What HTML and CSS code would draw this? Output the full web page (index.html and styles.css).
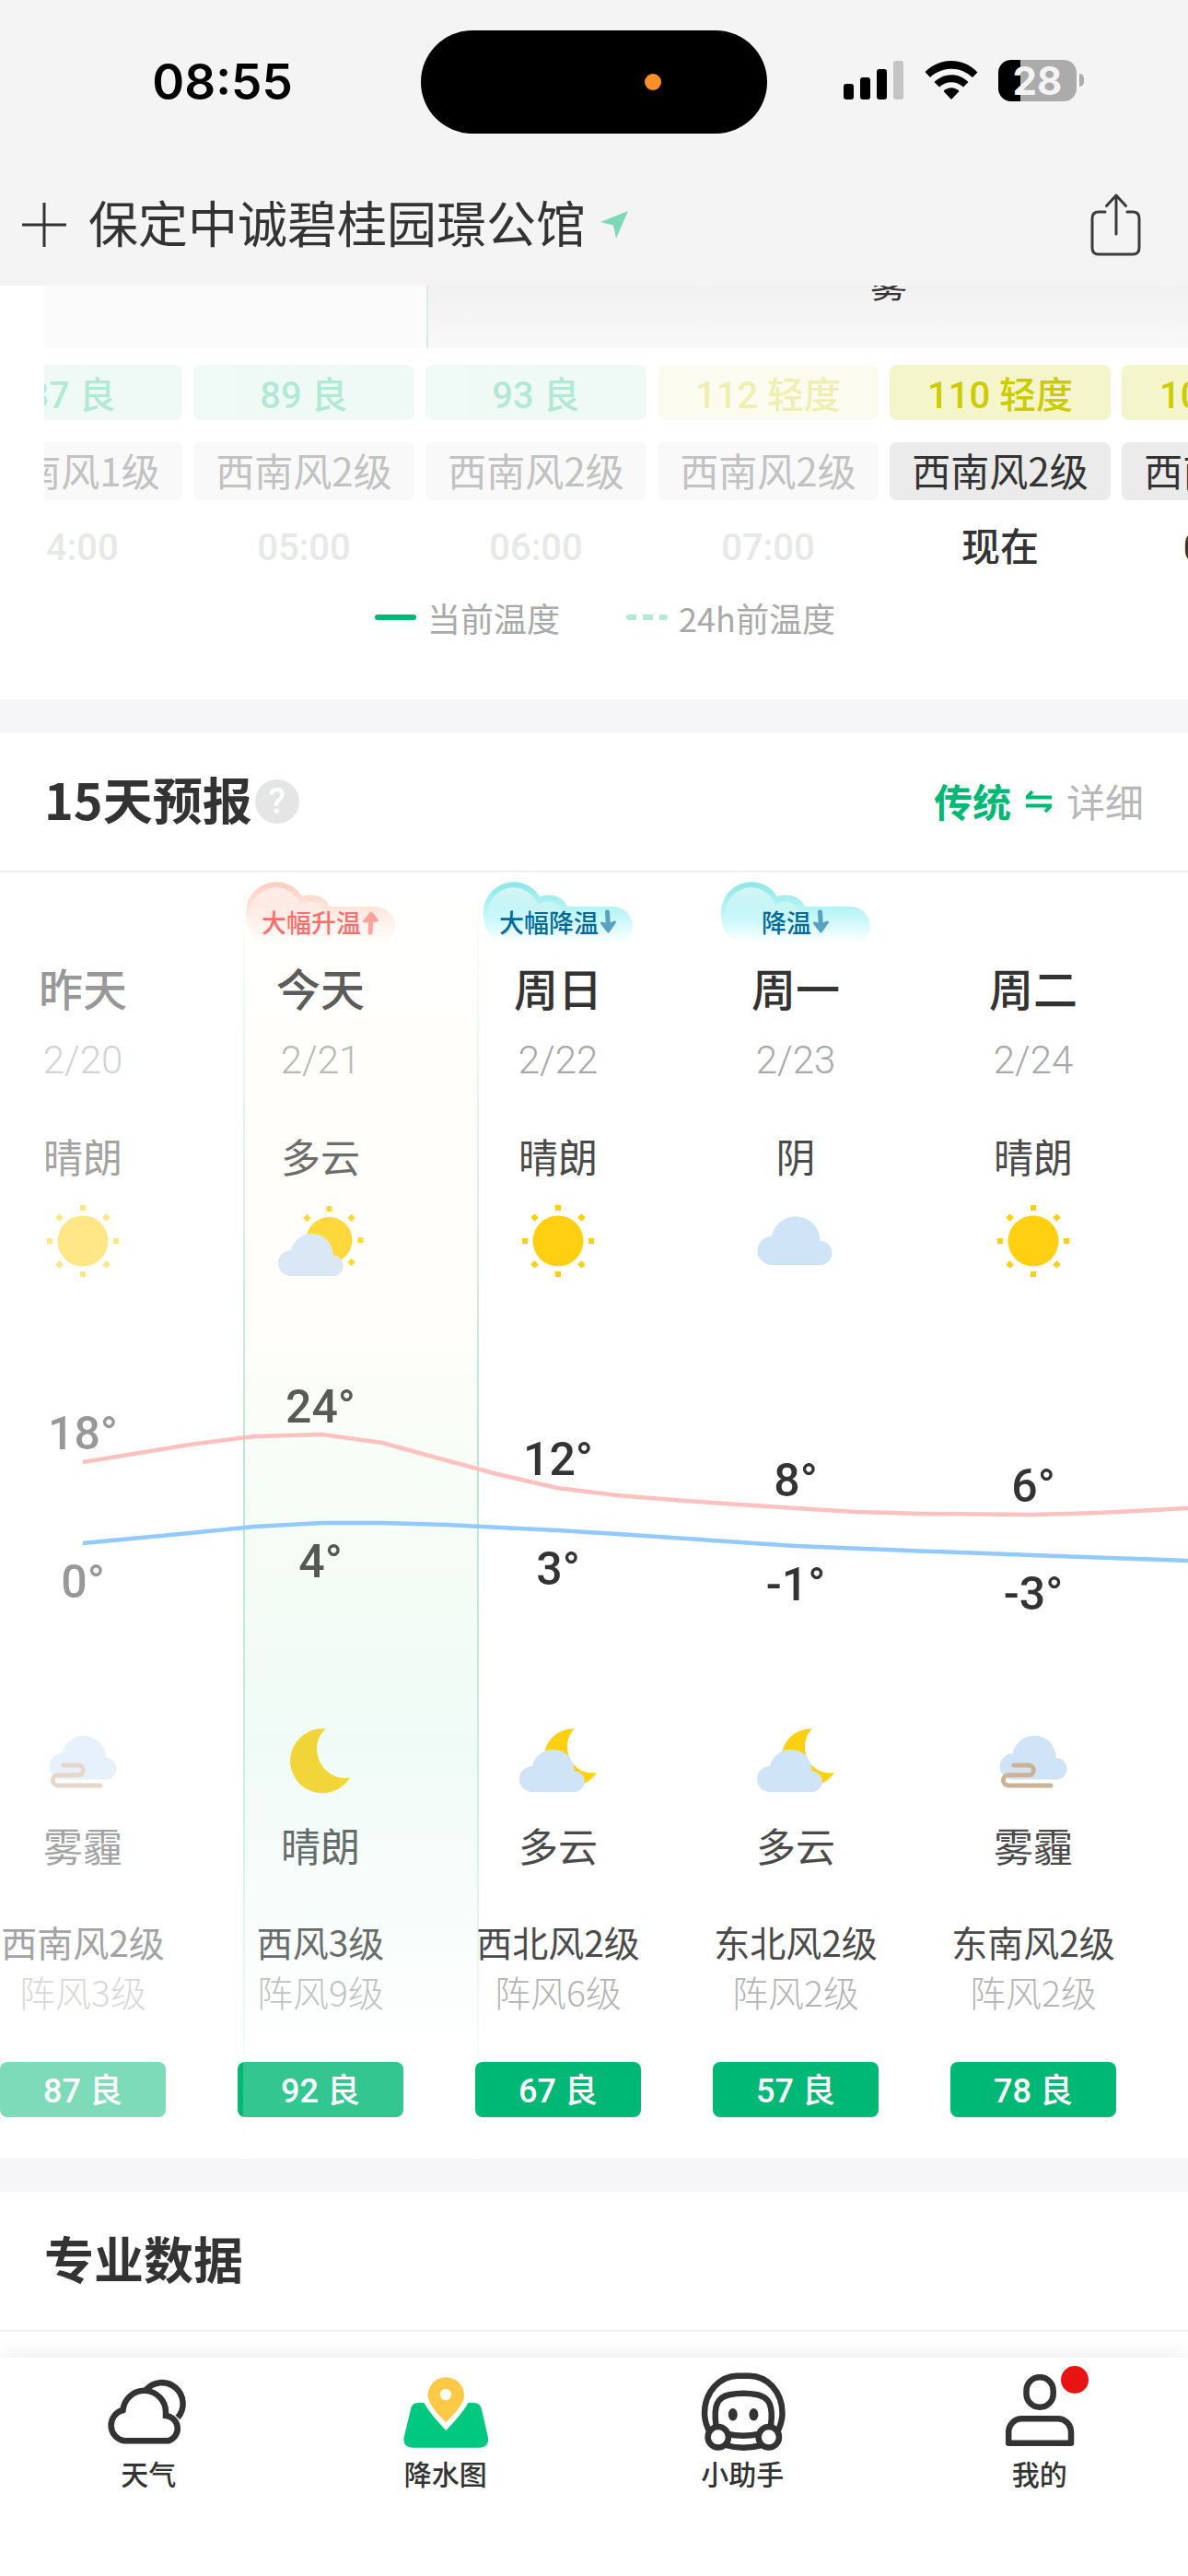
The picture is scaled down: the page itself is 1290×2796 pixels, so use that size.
FILE: index.html
```html
<!DOCTYPE html>
<html lang="zh-CN">
<head>
    <meta charset="UTF-8">
    <meta name="viewport" content="width=device-width, initial-scale=1.0">
    <title>15天预报</title>
    <link rel="stylesheet" href="styles.css">
</head>
<body>
    <header class="header">
        <div class="status">
            <span class="clock">08:55</span>
            <div class="island"><span class="mic-dot"></span></div>
            <div class="status-icons">
                <svg width="66" height="42" viewBox="0 0 66 42">
                    <rect x="0" y="25" width="11" height="17" rx="3"/>
                    <rect x="18" y="18" width="11" height="24" rx="3"/>
                    <rect x="36" y="9" width="11" height="33" rx="3"/>
                    <rect x="54" y="0" width="11" height="42" rx="3" fill="#c4c4c4"/>
                </svg>
                <svg width="58" height="42" viewBox="0 0 58 42">
                    <path d="M0.5 12C16.500 -4 41.500 -4 57.500 12.500L52 18C39 5.500 19 5.500 6 18Z"/>
                    <path d="M10.500 23C21 12.500 37 12.500 47.500 23L42 28.500C34.500 21.500 23.500 21.500 16 28.500Z"/>
                    <path d="M20.500 33C25.500 28 32.500 28 37.500 33L29 42Z"/>
                </svg>
                <div class="battery"><span class="battery-level">28</span><span class="battery-tip"></span></div>
            </div>
        </div>
        <div class="titlebar">
            <button class="icon-btn" aria-label="添加城市">
                <svg width="48" height="48" viewBox="0 0 48 48"><path d="M24 0V48M0 24H48" stroke="#333" stroke-width="3"/></svg>
            </button>
            <h1 class="city">保定中诚碧桂园璟公馆</h1>
            <svg class="locate" width="30" height="30" viewBox="0 0 30 30"><path d="M30 0L17 30L14 15.500L0 12Z" fill="#7cd9b8"/></svg>
            <button class="icon-btn share" aria-label="分享">
                <svg width="56" height="70" viewBox="0 0 56 70" fill="none" stroke="#3c3c3c" stroke-width="3" stroke-linecap="round" stroke-linejoin="round">
                    <path d="M16 21H9Q2 21 2 28V60Q2 67 9 67H46Q53 67 53 60V28Q53 21 46 21H40M28 45V3M17.500 14.500L28 3L38.500 14.500"/>
                </svg>
            </button>
        </div>
    </header>

    <main class="main">
        <section class="hourly">
            <div class="hour-chart">
                <div class="chart-past"></div>
                <div class="chart-now"><span class="chart-label">雾</span></div>
            </div>
            <div class="hour-clip"><div class="hours" id="hours"></div></div>
            <div class="legend">
                <span class="legend-item"><i class="dash"></i>当前温度</span>
                <span class="legend-item"><i class="dash dotted"></i>24h前温度</span>
            </div>
        </section>

        <section class="card">
            <div class="card-head">
                <h2>15天预报</h2>
                <button class="help" aria-label="说明">?</button>
                <div class="switch">
                    <button class="switch-on">传统</button>
                    <svg width="28" height="24" viewBox="0 0 28 24" fill="none" stroke="#00b876" stroke-width="4"><path d="M0 7.500H28M1 7.500L7 1M28 16.500H0M27 16.500L21 23"/></svg>
                    <button class="switch-off">详细</button>
                </div>
            </div>
            <div class="forecast">
                <div class="days" id="days"></div>
                <div class="today-band"></div>
                <svg class="curves" viewBox="0 0 1290 464" preserveAspectRatio="none" fill="none" stroke-width="4.500">
                    <polyline stroke="#ffc0c0" points="90,190 206,171 276,162 350,160 415,169 477,186 540,203 605,218 670,226 744,232 864,240 930,244 1004,246 1121,247 1193,245 1290,240"/>
                    <polyline stroke="#92caff" points="90,278 206,267 276,260 350,256 415,256 485,258 605,264 670,268 864,281 987,286 1121,291 1234,295 1290,297"/>
                </svg>
            </div>
        </section>

        <section class="card">
            <div class="card-head">
                <h2>专业数据</h2>
            </div>
        </section>
    </main>

    <nav class="tabbar">
        <a class="tab" href="#weather">
            <svg width="100" height="90" viewBox="0 0 100 90" fill="none" stroke="#333" stroke-width="6.500">
                <path d="M47.500 24A22.800 22.800 0 1 1 82 54"/>
                <path d="M22.500 46A17 17 0 0 0 24 79.300H72A14 14 0 0 0 69 52V48A23.300 23.300 0 0 0 22.500 46Z"/>
            </svg>
            天气
        </a>
        <a class="tab" href="#rain">
            <svg width="100" height="90" viewBox="0 0 100 90">
                <path fill="#00c880" d="M26.300 38H20Q13 38 12 45L4.500 76Q3.500 86.700 14 86.700H86Q97 86.700 96 76L89 45Q87.500 38 80.500 38H74.500Q68 50 50.200 68Q33 50 26.300 38Z"/>
                <path fill="#fec944" fill-rule="evenodd" d="M50.200 59.300C42 51 30.600 39 30.600 30A19.700 19.700 0 0 1 70 30C70 39 58.500 51 50.200 59.300ZM50 22.800A6.200 6.200 0 1 0 50 35.200A6.200 6.200 0 1 0 50 22.800Z"/>
            </svg>
            降水图
        </a>
        <a class="tab" href="#helper">
            <svg width="100" height="90" viewBox="0 0 100 90" fill="none" stroke="#333" stroke-width="6.500">
                <path d="M13.500 68C10 60 9 55 9 49.500C9 26 26 8.700 45 8.700H57.500C77 8.700 93.500 26 93.500 49.500C93.500 55 92.500 60 89 68"/>
                <path d="M21.500 63C18.500 41 23 32 36 29.300Q51 26.200 66.500 29.300C79 32 84 41 81 63"/>
                <path d="M34 72Q51 75.500 68 72M32 84Q51 89.500 71 84"/>
                <circle cx="23.800" cy="75.300" r="11.200" fill="#fff"/>
                <circle cx="78.800" cy="75.300" r="11.200" fill="#fff"/>
                <g fill="#333" stroke="none"><ellipse cx="39.800" cy="50.700" rx="5" ry="6.800"/><ellipse cx="62.400" cy="50.700" rx="5" ry="6.800"/></g>
            </svg>
            小助手
        </a>
        <a class="tab" href="#me">
            <svg width="100" height="90" viewBox="0 0 100 90" fill="none" stroke="#333" stroke-width="6.500" stroke-linejoin="round">
                <rect x="35.500" y="10.300" width="29.200" height="32.400" rx="14.500"/>
                <path d="M16.200 81.700V70C16.200 62 22 55.300 31 55.300H69C78 55.300 84 62 84 70V81.700Z"/>
                <circle cx="88" cy="13" r="15" fill="#e71413" stroke="none"/>
            </svg>
            我的
        </a>
    </nav>

    <script>
        const hours = [
            { aqi: "87 良", level: "good", wind: "西南风1级", time: "04:00", past: true },
            { aqi: "89 良", level: "good", wind: "西南风2级", time: "05:00", past: true },
            { aqi: "93 良", level: "good", wind: "西南风2级", time: "06:00", past: true },
            { aqi: "112 轻度", level: "light", wind: "西南风2级", time: "07:00", past: true },
            { aqi: "110 轻度", level: "light", wind: "西南风2级", time: "现在" },
            { aqi: "108 轻度", level: "light", wind: "西南风2级", time: "09:00" }
        ];

        // highTop / lowTop: label position inside the curve area
        const days = [
            { name: "昨天", date: "2/20", day: "晴朗", dayIcon: "sun", high: 18, highTop: 129, low: 0, lowTop: 290, nightIcon: "haze", night: "雾霾", wind: "西南风2级", gust: "阵风3级", aqi: "87 良", cls: "past" },
            { name: "今天", date: "2/21", day: "多云", dayIcon: "sunCloud", high: 24, highTop: 100, low: 4, lowTop: 268, nightIcon: "moon", night: "晴朗", wind: "西风3级", gust: "阵风9级", aqi: "92 良", tip: "大幅升温", tipType: "up" },
            { name: "周日", date: "2/22", day: "晴朗", dayIcon: "sun", high: 12, highTop: 157, low: 3, lowTop: 276, nightIcon: "moonCloud", night: "多云", wind: "西北风2级", gust: "阵风6级", aqi: "67 良", tip: "大幅降温", tipType: "down" },
            { name: "周一", date: "2/23", day: "阴", dayIcon: "cloud", high: 8, highTop: 180, low: -1, lowTop: 293, nightIcon: "moonCloud", night: "多云", wind: "东北风2级", gust: "阵风2级", aqi: "57 良", tip: "降温", tipType: "down" },
            { name: "周二", date: "2/24", day: "晴朗", dayIcon: "sun", high: 6, highTop: 186, low: -3, lowTop: 303, nightIcon: "haze", night: "雾霾", wind: "东南风2级", gust: "阵风2级", aqi: "78 良" }
        ];

        const ray = (angle, r) => `<rect x="-3" y="${-r - 3}" width="6" height="6" transform="rotate(${angle})"/>`;
        const smallCloud = `<path fill="#d0e4f8" d="M18 60A23 23 0 0 1 63.500 65A11.700 11.700 0 0 1 66 88H18A14 14 0 0 1 18 60Z"/>`;
        const bigCloud = `<path fill="#d0e4f8" d="M24 44.700A26.500 26.500 0 0 1 76.500 49.700A13.300 13.300 0 0 1 79 76H22.500A15.700 15.700 0 0 1 24 44.700Z"/>`;

        const icons = {
            sun: `<g fill="#ffd012" transform="translate(50 50)"><circle r="27.500"/>${[0, 45, 90, 135, 180, 225, 270, 315].map(a => ray(a, 36)).join("")}</g>`,
            sunCloud: `<g fill="#ffd012" transform="translate(59.500 49)"><circle r="25"/>${[-45, 0, 45, 90, 135].map(a => ray(a, 34)).join("")}</g>${smallCloud}`,
            cloud: bigCloud,
            moon: `<path fill="#ffd012" d="M56 15.500A35 35 0 1 0 82 68.500C62 72 46 55 46 37C46 28 50 20 56 15.500Z"/>`,
            moonCloud: `<path fill="#ffd012" d="M68 15.500A31 31 0 1 0 92 63C74 66 60 52 60 35C60 27 63 20 68 15.500Z"/><g transform="translate(4 -4)">${smallCloud}</g>`,
            haze: `<g transform="translate(6 2) scale(.9)">${bigCloud}</g><path fill="none" stroke="#cdb297" stroke-width="5" stroke-linecap="round" d="M29 55H45A5.300 5.300 0 0 1 45 65.700H23A5.600 5.600 0 0 0 23 77H69"/>`
        };

        const icon = (name) => `<svg class="w-icon" width="100" height="100" viewBox="0 0 100 100">${icons[name]}</svg>`;

        const tip = (el) => {
            if (!el.tip) return `<div class="tip"></div>`;
            const arrow = el.tipType === "up"
                ? `<path d="M9 24L10 6" stroke="#ff8c87"/><path d="M2.500 12L10 3L16.500 11Z" fill="#ff8c87" stroke="#ff8c87" stroke-width="3"/>`
                : `<path d="M8.500 2L9.500 19" stroke="#58a3c2"/><path d="M2.500 14L9.500 23L16.500 13L9.500 16Z" fill="#58a3c2" stroke="#58a3c2" stroke-width="3"/>`;
            return `
                <div class="tip tip-${el.tipType}">
                    <svg class="tip-bg" width="162" height="64" viewBox="0 0 162 64">
                        <defs>
                            <linearGradient id="tip-${el.date}" x1="0" y1="0" x2="0" y2="1">
                                <stop offset="0" class="tip-c1"/><stop offset=".55" class="tip-c2"/><stop offset="1" class="tip-c3"/>
                            </linearGradient>
                            <linearGradient id="tip-in-${el.date}" x1="0" y1="0" x2="0" y2="1">
                                <stop offset="0" stop-color="#fff" stop-opacity=".6"/><stop offset="1" stop-color="#fff" stop-opacity="0"/>
                            </linearGradient>
                        </defs>
                        <path fill="url(#tip-${el.date})" d="M20 64C6 60 0 46 0 33A33 33 0 0 1 61 13C73 9 87 13 91 24H139C153 24 162 34 162 46C162 54 158 60 150 64Z"/>
                        <path fill="url(#tip-in-${el.date})" d="M5 36A28 28 0 0 1 59 22C70 15 80 19 85 28V40H5Z"/>
                    </svg>
                    <span>${el.tip}</span>
                    <svg width="19" height="26" viewBox="0 0 19 26" fill="none" stroke-width="5" stroke-linecap="round" stroke-linejoin="round">${arrow}</svg>
                </div>`;
        };

        document.getElementById("hours").innerHTML = hours.map((el) => `
            <div class="hour ${el.past ? "past" : ""}">
                <div class="hour-aqi ${el.level}">${el.aqi}</div>
                <div class="hour-wind">${el.wind}</div>
                <div class="hour-time">${el.time}</div>
            </div>
        `).join("");

        document.getElementById("days").innerHTML = days.map((el) => `
            <div class="day ${el.cls || ""}">
                ${tip(el)}
                <div class="day-name">${el.name}</div>
                <div class="day-date">${el.date}</div>
                <div class="day-text">${el.day}</div>
                ${icon(el.dayIcon)}
                <div class="temps">
                    <span class="temp" style="top: ${el.highTop}px">${el.high}°</span>
                    <span class="temp" style="top: ${el.lowTop}px">${el.low}°</span>
                </div>
                ${icon(el.nightIcon)}
                <div class="day-text night">${el.night}</div>
                <div class="day-wind">${el.wind}</div>
                <div class="day-gust">${el.gust}</div>
                <div class="day-aqi">${el.aqi}</div>
            </div>
        `).join("");
    </script>
</body>
</html>
```
FILE: styles.css
```css
* {
    box-sizing: border-box;
}

body {
    margin: 0;
    min-height: 100vh;
    display: flex;
    flex-direction: column;
    background: #fff;
    color: #333;
    font-family: "Noto Sans CJK SC", sans-serif;
    white-space: nowrap;
    overflow-x: hidden;
}

h1, h2 {
    margin: 0;
}

button {
    padding: 0;
    border: 0;
    background: none;
    font: inherit;
    color: inherit;
}

svg {
    display: block;
    flex: none;
    overflow: visible;
}

/* header */
.header {
    background: #f4f4f4;
}

.status {
    display: grid;
    grid-template-columns: 1fr 376px 1fr;
    align-items: center;
    padding-top: 33px;
}

.clock {
    padding-left: 26px;
    text-align: center;
    color: #000;
    font: 600 53px/60px Inter, sans-serif;
}

.island {
    display: flex;
    align-items: center;
    justify-content: flex-end;
    height: 112px;
    padding-right: 115px;
    border-radius: 56px;
    background: #000;
}

.mic-dot {
    width: 18px;
    height: 18px;
    border-radius: 50%;
    background: #ff8f28;
}

.status-icons {
    display: flex;
    align-items: center;
    justify-content: center;
    gap: 22px;
    padding: 0 30px 4px 0;
}

.battery {
    display: flex;
    align-items: center;
    gap: 3px;
}

.battery-level {
    width: 85px;
    border-radius: 14px;
    background: linear-gradient(90deg, #000 28%, #ababab 28%);
    color: #f4f4f4;
    text-align: center;
    font: 700 42px/45px Inter, sans-serif;
}

.battery-tip {
    width: 5px;
    height: 14px;
    border-radius: 0 7px 7px 0;
    background: #ababab;
}

.titlebar {
    display: flex;
    align-items: center;
    height: 165px;
    padding: 33px 50px 0 24px;
}

.city {
    margin: 0 16px 6px 24px;
    font-size: 54px;
    font-weight: 400;
    line-height: 72px;
}

.share {
    margin-left: auto;
}

.main {
    flex: 1;
}

/* hourly */
.hourly {
    padding-bottom: 64px;
}

.hour-chart {
    display: flex;
    height: 68px;
    padding-left: 48px;
    overflow: hidden;
}

.chart-past {
    width: 415px;
    background: #fbfbfb;
}

.chart-now {
    position: relative;
    flex: 1;
    border-left: 2px solid #d5f1e7;
    background: linear-gradient(#f1f1f1, #f9f9f9);
}

.chart-label {
    position: absolute;
    top: -29px;
    left: 480px;
    font-size: 40px;
    line-height: 50px;
}

.hour-clip {
    margin-left: 48px;
    padding-top: 18px;
    overflow: hidden;
}

.hours {
    display: flex;
    gap: 12px;
    margin-left: -90px;
}

.hour {
    flex: none;
    width: 240px;
    font-size: 42px;
    text-align: center;
}

.hour-aqi {
    height: 60px;
    padding-top: 4px;
    border-radius: 8px;
    line-height: 60px;
    font-size: 40px;
    font-weight: 500;
    font-family: Roboto, "Noto Sans CJK SC", sans-serif;
}

.hour-aqi.light {
    background: #f5f5cc;
    color: #cccc00;
}

.hour-aqi.good {
    background: #ccf1e4;
    color: #00b876;
}

.past .hour-aqi {
    opacity: .3;
}

.hour-wind {
    height: 63px;
    margin-top: 24px;
    border-radius: 8px;
    background: #ebebeb;
    line-height: 60px;
}

.past .hour-wind {
    background: #f9f9f9;
    color: #c2c2c2;
}

.hour-time {
    margin-top: 22px;
    line-height: 60px;
    font-weight: 500;
    font-family: Roboto, "Noto Sans CJK SC", sans-serif;
}

.past .hour-time {
    color: #e8e8e8;
    font-size: 40px;
}

.legend {
    display: flex;
    justify-content: center;
    gap: 72px;
    margin-top: 20px;
    padding-left: 24px;
    color: #a9a9a9;
    font-size: 36px;
    line-height: 50px;
}

.legend-item {
    display: flex;
    align-items: center;
    gap: 12px;
}

.dash {
    width: 45px;
    height: 6px;
    border-radius: 3px;
    background: #00b876;
}

.dash.dotted {
    background: repeating-linear-gradient(90deg, #b3ead6 0 11px, #fff 11px 18px);
}

/* cards */
.card {
    border-top: 36px solid #f6f6f8;
}

.card-head {
    display: flex;
    align-items: center;
    height: 152px;
    padding: 0 48px;
    border-bottom: 2px solid #f1f1f1;
}

.card-head h2 {
    padding-bottom: 6px;
    font-size: 54px;
    font-weight: 700;
    line-height: 72px;
}

.help {
    width: 48px;
    height: 48px;
    margin-left: 3px;
    border-radius: 50%;
    background: #e5e5e5;
    color: #fff;
    font: 500 38px/48px Roboto, sans-serif;
}

.switch {
    display: flex;
    align-items: center;
    gap: 16px;
    margin-left: auto;
    font-size: 42px;
    line-height: 60px;
}

.switch button {
    padding-bottom: 2px;
}

.switch-on {
    color: #00b876;
    font-weight: 700;
}

.switch-off {
    color: #b8b8b8;
}

/* 15 days */
.forecast {
    position: relative;
    overflow: hidden;
}

.days {
    display: grid;
    grid-template-columns: repeat(5, 1fr);
    padding: 13px 0 45px;
}

.day {
    display: flex;
    flex-direction: column;
    align-items: center;
    width: 180px;
}

.day.past {
    opacity: .5;
}

/* days after today sit above the highlight */
.day:nth-child(n+3) {
    position: relative;
    z-index: 1;
}

.tip {
    position: relative;
    display: flex;
    align-items: center;
    justify-content: center;
    gap: 1px;
    width: 162px;
    height: 64px;
    padding-top: 18px;
    font-size: 27px;
    font-weight: 500;
    line-height: 36px;
}

.tip-bg {
    position: absolute;
    inset: 0;
}

.tip > :not(.tip-bg) {
    position: relative;
}

.tip-up {
    color: #ff4a49;
}

.tip-up .tip-c1 {
    stop-color: #ffbfb0;
}

.tip-up .tip-c2 {
    stop-color: #ffe9e0;
}

.tip-down {
    color: #006b99;
}

.tip-down .tip-c1 {
    stop-color: #8de6e6;
}

.tip-down .tip-c2 {
    stop-color: #c3f7f9;
}

.tip-c3 {
    stop-color: #fff;
}

.day-name {
    margin-top: 17px;
    font-size: 48px;
    font-weight: 500;
    line-height: 60px;
}

.day-date {
    margin-top: 25px;
    color: #a9a9a9;
    font: 300 42px/50px Roboto, sans-serif;
}

.day-text {
    margin-top: 48px;
    color: #4a4a4a;
    font-size: 43px;
    line-height: 60px;
}

.w-icon {
    margin-top: 13px;
}

.temps {
    position: relative;
    width: 100%;
    height: 464px;
}

.temps + .w-icon {
    margin-top: 0;
}

.temp {
    position: absolute;
    left: 0;
    width: 100%;
    text-align: center;
    font: 500 50px/60px Roboto, sans-serif;
}

.day-text.night {
    margin-top: 11px;
}

.day-wind,
.day-gust {
    font-size: 39px;
    line-height: 54px;
}

.day-wind {
    margin-top: 48px;
    color: #4a4a4a;
}

.day-gust {
    color: #b5b5b5;
    font-weight: 300;
}

.day-aqi {
    width: 100%;
    height: 60px;
    margin-top: 50px;
    padding-top: 2px;
    border-radius: 8px;
    background: #00b876;
    color: #fff;
    text-align: center;
    font: 500 36px/60px Roboto, "Noto Sans CJK SC", sans-serif;
}

.today-band {
    position: absolute;
    top: 0;
    bottom: 0;
    left: calc(20% + 6px);
    width: calc(20% - 2px);
    border: solid transparent;
    border-width: 0 2px;
    border-image: linear-gradient(rgba(0, 160, 110, 0), rgba(0, 160, 110, .25) 45%, rgba(0, 160, 110, .2) 60%, rgba(0, 160, 110, 0)) 1;
    background: linear-gradient(rgba(255, 255, 255, .2), rgba(255, 250, 230, .2) 20%, rgba(255, 250, 230, .2) 35%, rgba(205, 242, 210, .2) 52%, rgba(180, 235, 215, .2) 68%, rgba(255, 255, 255, .2) 92%);
}

.curves {
    position: absolute;
    z-index: 2;
    top: 450px;
    left: 0;
    width: 100%;
    height: 464px;
}

/* tab bar */
.tabbar {
    display: grid;
    grid-template-columns: repeat(4, 1fr);
    margin-top: 28px;
    padding: 11px 0 92px;
    background: #fff;
    box-shadow: 0 -2px 24px rgba(0, 0, 0, .08);
}

.tab {
    display: flex;
    flex-direction: column;
    align-items: center;
    gap: 4px;
    color: #333;
    font-size: 30px;
    font-weight: 500;
    line-height: 40px;
    text-decoration: none;
}
```
